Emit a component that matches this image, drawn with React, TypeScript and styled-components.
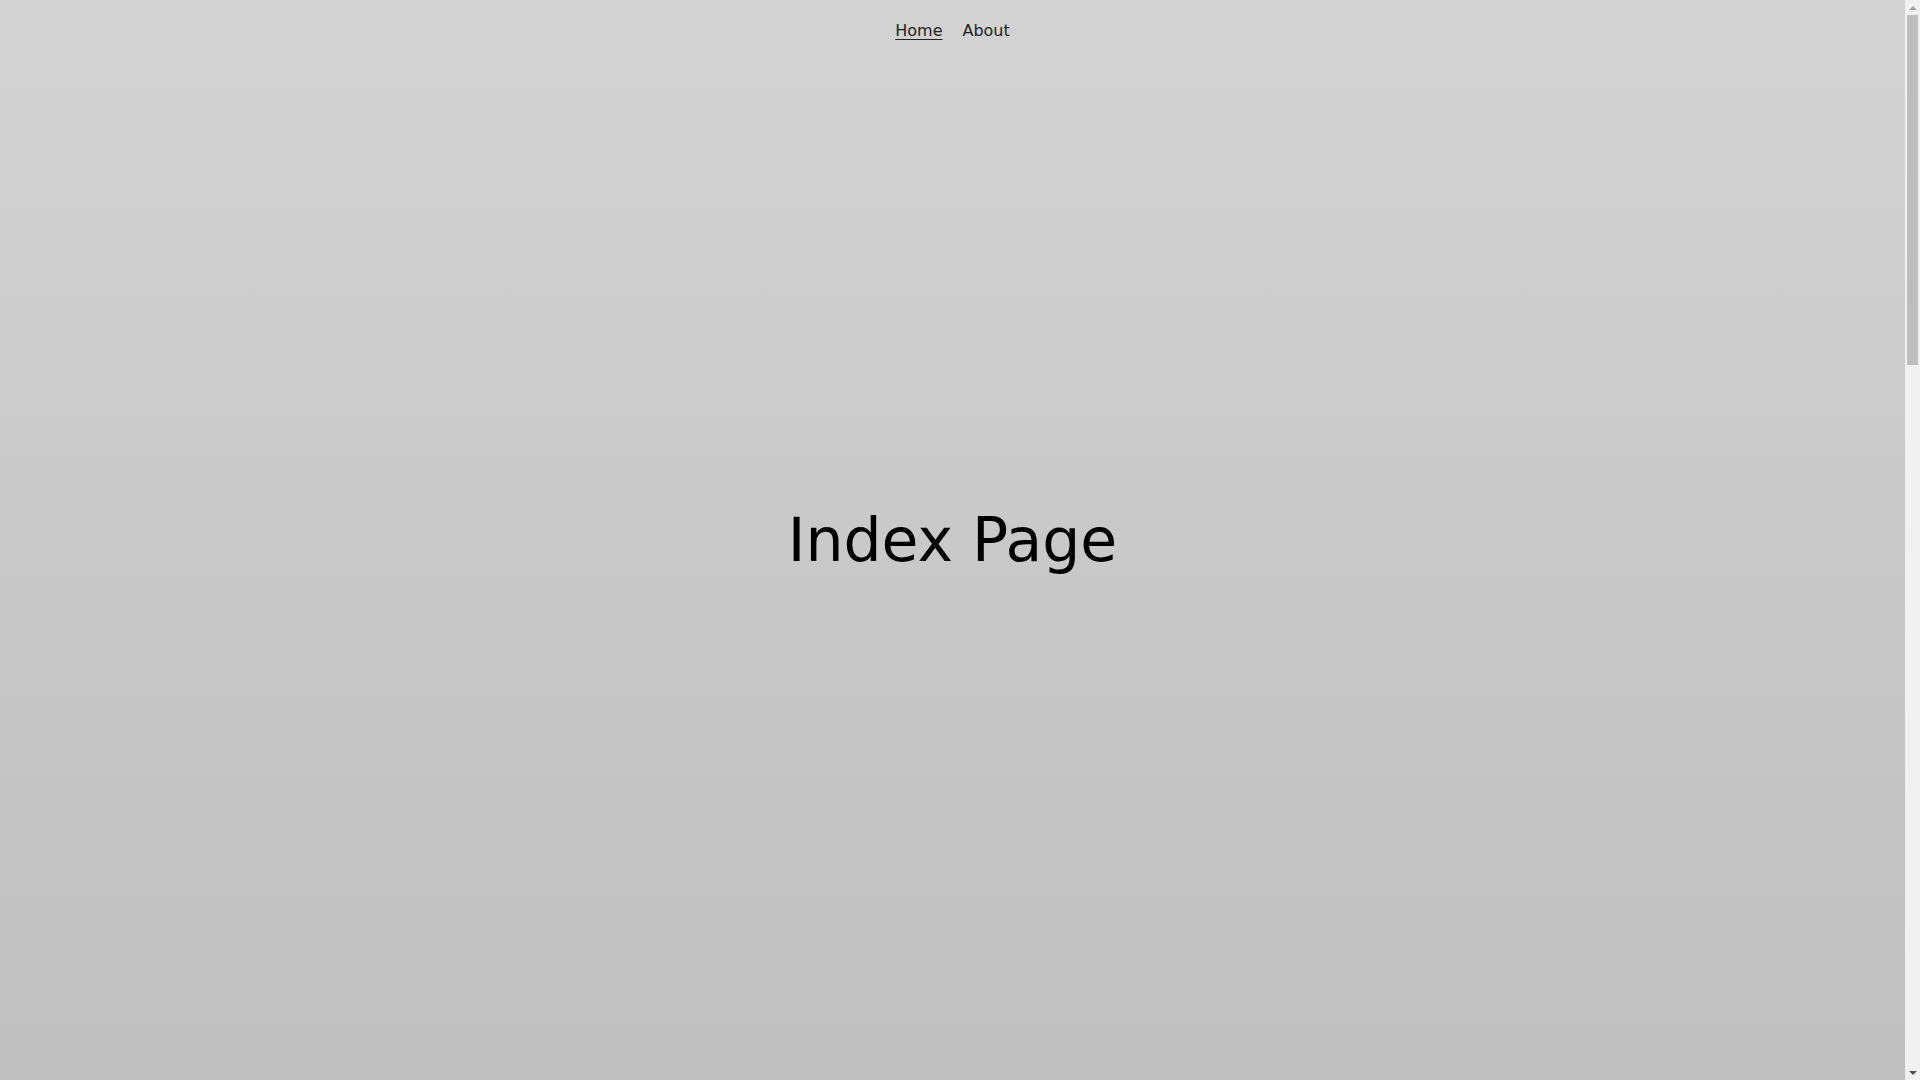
import styled, { createGlobalStyle } from 'styled-components';

const GlobalStyles = createGlobalStyle`
  html, body {
    margin: 0;
    padding: 0;
  }

  body {
    font-family: "DejaVu Sans", Verdana, sans-serif;
    color: #111111;
    background: #d3d3d3;
  }
`;

const Page = styled.div`
  display: grid;
  grid-template-columns: 1fr 15px;
  min-height: 300vh;
  background: linear-gradient(180deg, #d3d3d3 0%, #979797 100%);
`;

const Content = styled.div`
  position: relative;
  min-width: 0;
`;

const Nav = styled.nav`
  position: absolute;
  top: 0;
  left: 0;
  right: 0;
  display: flex;
  justify-content: center;
  gap: 20px;
  padding-top: 19px;
  font-size: 16px;
  line-height: 1.5;
`;

const NavLink = styled.a<{ $active?: boolean }>`
  color: #222222;
  text-decoration: ${(p) => (p.$active ? 'underline' : 'none')};
  text-underline-offset: 3px;
  cursor: pointer;
`;

const Hero = styled.main`
  height: 100vh;
  display: flex;
  align-items: center;
  justify-content: center;
`;

const Title = styled.h1`
  margin: 0;
  font-size: 60px;
  line-height: 1;
  font-weight: 400;
  color: #000000;
`;

/* page scrollbar, drawn so the frame keeps its 15px gutter */
const ScrollBar = styled.div`
  position: sticky;
  top: 0;
  height: 100vh;
  display: flex;
  flex-direction: column;
  background: #f1f1f1;
`;

const Arrow = styled.div<{ $down?: boolean; $color: string }>`
  height: 15px;
  display: flex;
  align-items: center;
  justify-content: center;

  &::before {
    content: '';
    width: 0;
    height: 0;
    border-left: 4px solid transparent;
    border-right: 4px solid transparent;
    ${(p) =>
      p.$down
        ? `border-top: 4px solid ${p.$color};`
        : `border-bottom: 4px solid ${p.$color};`}
  }
`;

const Track = styled.div`
  flex: 1;
  padding: 0 2px;
`;

const Thumb = styled.div`
  height: 33.3%;
  background: #bdbdbd;
`;

export default function App() {
  return (
    <>
      <GlobalStyles />
      <Page>
        <Content>
          <Nav>
            <NavLink $active>Home</NavLink>
            <NavLink>About</NavLink>
          </Nav>
          <Hero>
            <Title>Index Page</Title>
          </Hero>
        </Content>
        <ScrollBar>
          <Arrow $color="#a3a3a3" />
          <Track>
            <Thumb />
          </Track>
          <Arrow $down $color="#505050" />
        </ScrollBar>
      </Page>
    </>
  );
}
